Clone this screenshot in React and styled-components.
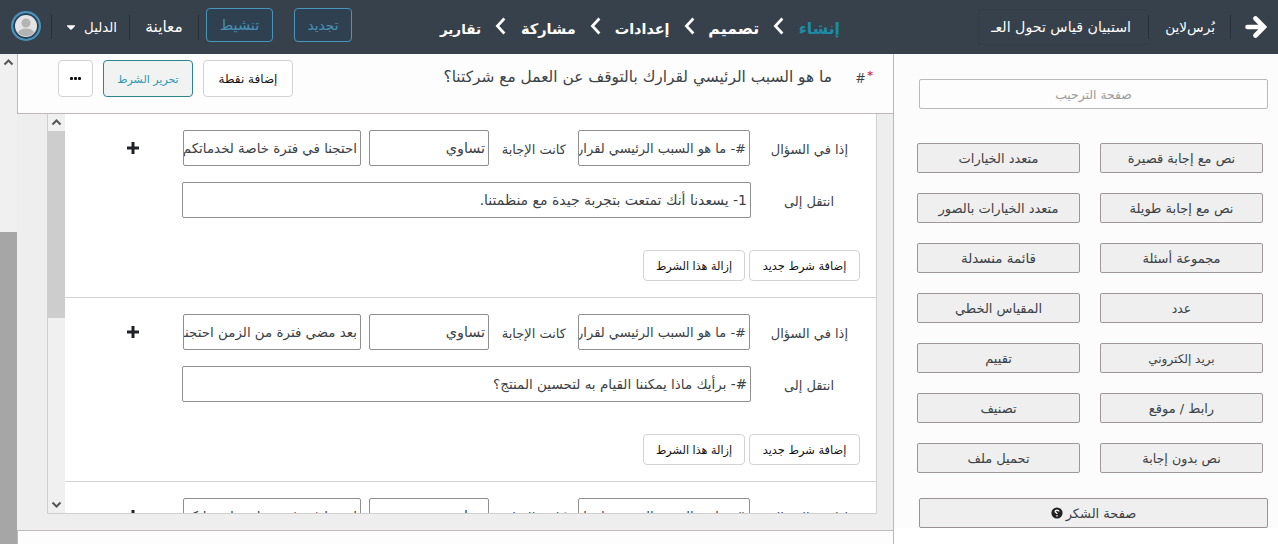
import React from 'react';
import styled, { createGlobalStyle } from 'styled-components';
import { FaCaretDown } from 'react-icons/fa';

const GlobalStyle = createGlobalStyle`
  * {
    box-sizing: border-box;
  }

  body {
    margin: 0;
    overflow: hidden;
    font-family: 'DejaVu Sans', sans-serif;
    color: #3c4146;
    background: #fff;
  }

  button {
    font-family: inherit;
    cursor: pointer;
  }
`;

const Page = styled.div`
  display: flex;
  flex-direction: column;
  width: 1278px;
  height: 544px;
  overflow: hidden;
`;

const Text = styled.span`
  font-size: ${({ $size }) => $size || 13}px;
  white-space: nowrap;
`;

const TopBar = styled.header`
  display: flex;
  align-items: center;
  flex: none;
  height: 54px;
  background: #37414b;
  color: #fff;
`;

const BackLink = styled.a`
  display: flex;
  align-items: center;
  width: 48px;
  height: 24px;
  padding-right: 11px;
  border-left: 1px solid #28313b;
`;

const Brand = styled.a`
  display: flex;
  align-items: center;
  width: 82px;
  height: 24px;
  padding-right: 15px;
  border-left: 1px solid #28313b;
`;

const SurveyName = styled.div`
  display: flex;
  align-items: center;
  width: 170px;
  height: 36px;
  padding-right: 17px;
  border: 1px solid #333d47;
  border-right: 0;
  border-radius: 4px;
`;

const Steps = styled.nav`
  display: flex;
  align-items: center;
  width: 400px;
  margin: 3px 138px 0 88px;
  font-weight: bold;
`;

const Step = styled.a`
  flex: none;
  width: ${({ $width }) => $width}px;
  color: ${({ $active }) => ($active ? '#1d8ba6' : '#fff')};
  line-height: 20px;
  white-space: nowrap;
`;

const StepArrow = styled.svg`
  flex: 1;
  height: 18px;
  margin-bottom: 5px;
`;

const OutlineButton = styled.button`
  width: ${({ $width }) => $width}px;
  height: 34px;
  margin: 0 0 4px ${({ $gap }) => $gap}px;
  padding: 0;
  border: 1px solid #4696bd;
  border-radius: 4px;
  background: #2f4151;
  color: #4790b4;
`;

const MenuLink = styled.a`
  display: flex;
  align-items: center;
  justify-content: center;
  gap: 6px;
  width: ${({ $width }) => $width}px;
  height: 25px;
  border-right: 1px solid #28313b;
`;

const AvatarCell = styled.div`
  display: flex;
  align-items: center;
  width: 52px;
  height: 25px;
  padding-right: 9px;
  margin-bottom: 2px;
  border-right: 1px solid #28313b;
`;

const Body = styled.div`
  display: flex;
  flex: 1;
  min-height: 0;
`;

const Sidebar = styled.aside`
  width: 385px;
  height: 100%;
  padding: 25px 10px 0 25px;
  border-left: 1px solid #bdb9ba;
  background: linear-gradient(#fcfcfc 474px, #fff 474px);
`;

const WideButton = styled.button`
  display: flex;
  align-items: center;
  justify-content: center;
  gap: 3px;
  width: 349px;
  height: 30px;
  padding: 0;
  border: 1px solid ${({ $muted }) => ($muted ? '#b9b9b9' : '#979394')};
  border-radius: 2px;
  background: ${({ $muted }) => ($muted ? '#fdfdfd' : '#efefef')};
  color: ${({ $muted }) => ($muted ? '#9c9c9c' : '#3c4146')};
`;

const TypeGrid = styled.div`
  display: grid;
  grid-template-columns: 163px 163px;
  gap: 20px;
  width: 346px;
  margin: 34px 5px 25px 0;
`;

const TypeButton = styled.button`
  height: 30px;
  padding: 0;
  border: 1px solid #9c9899;
  border-radius: 2px;
  background: #efefef;
  color: #3c4146;
`;

const Main = styled.main`
  display: flex;
  flex-direction: column;
  width: 876px;
`;

const QuestionBar = styled.section`
  display: flex;
  align-items: flex-start;
  height: 60px;
  padding: 6px 20px 0 40px;
  border-left: 1px solid #bdb9ba;
  border-bottom: 1px solid #bdb9ba;
  background: #fdfdfd;
`;

const Required = styled.span`
  width: 8px;
  color: #d2384c;
  font-size: 11px;
  font-weight: bold;
  line-height: 32px;
`;

const Hash = styled.span`
  width: 33px;
  font-family: 'Open Sans', sans-serif;
  font-size: 14px;
  line-height: 36px;
`;

const QuestionTitle = styled.h1`
  flex: 1;
  margin: 0;
  font-size: 15.4px;
  font-weight: normal;
  line-height: 34px;
  white-space: nowrap;
`;

const Button = styled.button`
  width: ${({ $width }) => $width}px;
  height: ${({ $height }) => $height || 31}px;
  margin-right: ${({ $gap }) => $gap || 0}px;
  padding: 0;
  border: 1px solid ${({ $active }) => ($active ? '#2b8492' : '#d3d3d3')};
  border-radius: 4px;
  background: ${({ $active }) => ($active ? '#f1f3f3' : '#fff')};
  color: ${({ $active }) => ($active ? '#3197ac' : '#111')};
`;

const Dots = styled.span`
  display: flex;
  justify-content: center;
  gap: 1px;

  i {
    width: 3px;
    height: 3px;
    border-radius: 1px;
    background: #111;
  }
`;

const PanelWrap = styled.div`
  height: 417px;
  padding: 0 16px 16px 30px;
  border-bottom: 1px solid #bdb9ba;
  background: #eee;
`;

const Panel = styled.div`
  display: flex;
  height: 400px;
  border: 1px solid #d0d0d0;
  border-top: 0;
  background: #fff;
  overflow: hidden;
`;

const Conditions = styled.div`
  flex: 1;
  overflow: hidden;
`;

const Condition = styled.div`
  height: 184px;
  padding: 16px 16px 0 0;
  border-bottom: 1px solid #d3d3d3;
`;

const Row = styled.div`
  display: flex;
  align-items: center;
  height: 36px;
  margin-bottom: ${({ $after }) => $after}px;
`;

const RowLabel = styled.label`
  width: ${({ $width }) => $width}px;
  padding-right: ${({ $inset }) => $inset || 0}px;
  white-space: nowrap;
`;

const Field = styled.div`
  display: flex;
  align-items: center;
  flex: none;
  width: ${({ $width }) => $width}px;
  height: 36px;
  padding-right: 3px;
  border: 1px solid #8f8f92;
  border-radius: 2px;
  background: #fff;
  overflow: hidden;
`;

const PlusMark = styled.svg`
  width: 12px;
  height: 12px;
  margin-right: 44px;
`;

const ScrollBar = styled.div`
  display: flex;
  flex-direction: column;
  align-items: center;
  flex: none;
  width: 17px;
  background: #f0f0f0;
`;

const ScrollArrow = styled.svg`
  flex: none;
  width: 17px;
  height: 17px;
  margin-top: ${({ $end }) => ($end ? 'auto' : 0)};
`;

const Thumb = styled.div`
  width: 17px;
  height: ${({ $height }) => $height}px;
  margin-top: ${({ $offset }) => $offset || 0}px;
  background: ${({ $color }) => $color};
`;

const BottomStrip = styled.div`
  flex: 1;
  border-left: 1px solid #bdb9ba;
  background: #fdfdfd;
`;

const steps = [
  { label: 'إنشاء', width: 42, size: 15.7, active: true },
  { label: 'تصميم', width: 51, size: 15.8 },
  { label: 'إعدادات', width: 55, size: 14.4 },
  { label: 'مشاركة', width: 56, size: 14.5 },
  { label: 'تقارير', width: 41, size: 13.5 },
];

const questionTypes = [
  { label: 'نص مع إجابة قصيرة' },
  { label: 'متعدد الخيارات' },
  { label: 'نص مع إجابة طويلة' },
  { label: 'متعدد الخيارات بالصور' },
  { label: 'مجموعة أسئلة' },
  { label: 'قائمة منسدلة', size: 13.4 },
  { label: 'عدد', size: 12.4 },
  { label: 'المقياس الخطي' },
  { label: 'بريد إلكتروني', size: 12 },
  { label: 'تقييم' },
  { label: 'رابط / موقع' },
  { label: 'تصنيف' },
  { label: 'نص بدون إجابة', size: 12.7 },
  { label: 'تحميل ملف' },
];

const conditions = [
  {
    answer: 'احتجنا في فترة خاصة لخدماتكم',
    target: '1- يسعدنا أنك تمتعت بتجربة جيدة مع منظمتنا.',
    targetSize: 14,
  },
  {
    answer: 'بعد مضي فترة من الزمن احتجنا',
    target: '#- برأيك ماذا يمكننا القيام به لتحسين المنتج؟',
    targetSize: 13.5,
  },
  { answer: 'احتجنا في فترة خاصة لخدماتكم', target: '' },
];

const BackArrow = () => (
  <svg width="22" height="24" viewBox="0 0 22 24">
    <path d="M2.500 12h15M10.500 3.500l8.500 8.500-8.500 8.500" fill="none" stroke="#fff" strokeWidth="4.600" strokeLinecap="round" />
  </svg>
);

const Chevron = () => (
  <StepArrow viewBox="0 0 12 18">
    <path d="M10 1.5 3 9l7 7.5" fill="none" stroke="#fff" strokeWidth="2.7" />
  </StepArrow>
);

const HelpIcon = () => (
  <svg width="12" height="12" viewBox="0 0 12 12">
    <circle cx="6" cy="6" r="5.6" fill="#222" />
    <path d="M8 4.500C7.700 2.700 4.200 2.700 4.200 4.500c0 1.200 1.800 1 1.800 2.400" fill="none" stroke="#efefef" strokeWidth="1.500" />
    <path d="M5.200 8.200h1.600v1.400H5.200z" fill="#efefef" />
  </svg>
);

const ArrowMark = ({ down }) => (
  <ScrollArrow viewBox="0 0 17 17" $end={down}>
    <path d={down ? 'M4.5 6.5l4 4 4-4' : 'M4.5 10.5l4-4 4 4'} fill="none" stroke="#555" strokeWidth="2" />
  </ScrollArrow>
);

const Avatar = () => (
  <svg width="32" height="32" viewBox="0 0 32 32">
    <circle cx="16" cy="16" r="14" fill="#e4e4e4" stroke="#4793c0" strokeWidth="2" />
    <circle cx="16" cy="16" r="12" fill="none" stroke="#24455c" strokeWidth="2" />
    <circle cx="16" cy="13" r="4.5" fill="#b3b3b3" />
    <path d="M8 22.500c1-2.700 4-4 8-4s7 1.300 8 4a10.500 10.500 0 0 1-16 0z" fill="#b3b3b3" />
  </svg>
);

const ConditionBlock = ({ answer, target, targetSize }) => (
  <Condition>
    <Row $after={16}>
      <RowLabel $width={110} $inset={12}>
        <Text>إذا في السؤال</Text>
      </RowLabel>
      <Field $width={172}>
        <Text>#- ما هو السبب الرئيسي لقرارك</Text>
      </Field>
      <RowLabel $width={89} $inset={12}>
        <Text>كانت الإجابة</Text>
      </RowLabel>
      <Field $width={120}>
        <Text $size={14.3}>تساوي</Text>
      </Field>
      <RowLabel $width={8} />
      <Field $width={178}>
        <Text $size={13.4}>{answer}</Text>
      </Field>
      <PlusMark viewBox="0 0 12 12">
        <path d="M6 0v12M0 6h12" stroke="#1f2226" strokeWidth="3" />
      </PlusMark>
    </Row>
    <Row $after={32}>
      <RowLabel $width={109} $inset={26}>
        <Text>انتقل إلى</Text>
      </RowLabel>
      <Field $width={569}>
        <Text $size={targetSize}>{target}</Text>
      </Field>
    </Row>
    <Button $width={111}>
      <Text $size={11.4}>إضافة شرط جديد</Text>
    </Button>
    <Button $width={102} $gap={4}>
      <Text $size={11.2}>إزالة هذا الشرط</Text>
    </Button>
  </Condition>
);

const App = () => {
  return (
    <Page dir="rtl">
      <GlobalStyle />
      <TopBar>
        <BackLink>
          <BackArrow />
        </BackLink>
        <Brand>
          <Text $size={13.6}>بُرس‌لاين</Text>
        </Brand>
        <SurveyName>
          <Text $size={14.2}>استبيان قياس تحول العـ</Text>
        </SurveyName>
        <Steps>
          {steps.map((step, index) => (
            <React.Fragment key={step.label}>
              {index > 0 && <Chevron />}
              <Step $width={step.width} $active={step.active}>
                <Text $size={step.size}>{step.label}</Text>
              </Step>
            </React.Fragment>
          ))}
        </Steps>
        <OutlineButton $width={58} $gap={21}>
          <Text $size={13.8}>تجديد</Text>
        </OutlineButton>
        <OutlineButton $width={67} $gap={7}>
          <Text $size={14.5}>تنشيط</Text>
        </OutlineButton>
        <MenuLink $width={69}>
          <Text $size={15.4}>معاينة</Text>
        </MenuLink>
        <MenuLink $width={78}>
          <Text $size={13.3}>الدليل</Text>
          <FaCaretDown size={14} />
        </MenuLink>
        <AvatarCell>
          <Avatar />
        </AvatarCell>
      </TopBar>
      <Body>
        <Sidebar>
          <WideButton $muted>
            <Text $size={12.4}>صفحة الترحيب</Text>
          </WideButton>
          <TypeGrid>
            {questionTypes.map((type) => (
              <TypeButton key={type.label}>
                <Text $size={type.size}>{type.label}</Text>
              </TypeButton>
            ))}
          </TypeGrid>
          <WideButton>
            <Text>صفحة الشكر</Text>
            <HelpIcon />
          </WideButton>
        </Sidebar>
        <Main>
          <QuestionBar>
            <Required>*</Required>
            <Hash>#</Hash>
            <QuestionTitle>ما هو السبب الرئيسي لقرارك بالتوقف عن العمل مع شركتنا؟</QuestionTitle>
            <Button $width={90} $height={37}>
              <Text $size={12}>إضافة نقطة</Text>
            </Button>
            <Button $width={90} $height={37} $gap={10} $active>
              <Text $size={11}>تحرير الشرط</Text>
            </Button>
            <Button $width={35} $height={37} $gap={10}>
              <Dots>
                <i />
                <i />
                <i />
              </Dots>
            </Button>
          </QuestionBar>
          <PanelWrap>
            <Panel>
              <Conditions>
                {conditions.map((condition, index) => (
                  <ConditionBlock key={index} {...condition} />
                ))}
              </Conditions>
              <ScrollBar>
                <ArrowMark />
                <Thumb $height={187} $color="#cdcdcd" />
                <ArrowMark down />
              </ScrollBar>
            </Panel>
          </PanelWrap>
          <BottomStrip />
        </Main>
        <ScrollBar>
          <ArrowMark />
          <Thumb $height={312} $offset={161} $color="#a6a6a6" />
        </ScrollBar>
      </Body>
    </Page>
  );
};

export default App;
